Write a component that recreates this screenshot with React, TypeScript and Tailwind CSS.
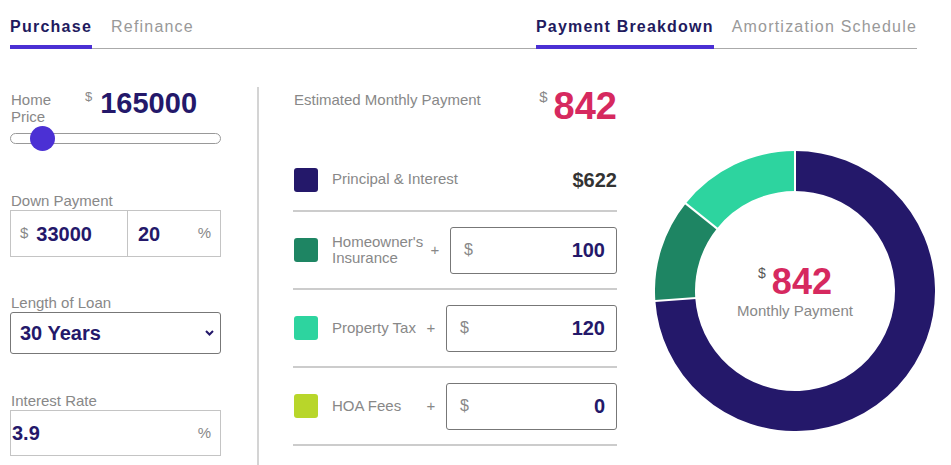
import React from "react";

const INDIGO = "#24186a";

function Donut() {
  const cx = 140, cy = 140, r = 120, sw = 40;
  const vals = [
    { v: 622, c: "#24186a" },
    { v: 100, c: "#1e8563" },
    { v: 120, c: "#2dd49f" },
  ];
  const total = vals.reduce((a, b) => a + b.v, 0);
  let acc = 0;
  const pt = (deg: number, rad: number) => {
    const a = ((deg - 90) * Math.PI) / 180;
    return [cx + rad * Math.cos(a), cy + rad * Math.sin(a)];
  };
  const arcs = vals.map((s) => {
    const start = (acc / total) * 360;
    acc += s.v;
    const end = (acc / total) * 360;
    const [x1, y1] = pt(start, r);
    const [x2, y2] = pt(end, r);
    const large = end - start > 180 ? 1 : 0;
    return { d: `M ${x1} ${y1} A ${r} ${r} 0 ${large} 1 ${x2} ${y2}`, c: s.c, start };
  });
  return (
    <svg width="280" height="280" viewBox="0 0 280 280">
      {arcs.map((a, i) => (
        <path key={i} d={a.d} stroke={a.c} strokeWidth={sw} fill="none" />
      ))}
      {arcs.map((a, i) => {
        const [x1, y1] = pt(a.start, r - sw / 2 - 1);
        const [x2, y2] = pt(a.start, r + sw / 2 + 1);
        return <line key={"l" + i} x1={x1} y1={y1} x2={x2} y2={y2} stroke="#fff" strokeWidth={2} />;
      })}
    </svg>
  );
}

function Row({
  color,
  label,
  labelW,
  value,
  h,
}: {
  color: string;
  label: React.ReactNode;
  labelW: string;
  value: string;
  h: string;
}) {
  return (
    <div className={`flex items-center ${h}`}>
      <div className="w-[24px] h-[24px] rounded-[3px] ml-[1px]" style={{ backgroundColor: color }} />
      <div className={`ml-[14px] ${labelW} text-[15px] leading-[16px] text-[#888]`}>{label}</div>
      <div className="w-[14px] text-center text-[15px] text-[#888]">+</div>
      <div className="ml-[8px] flex-1 h-[47px] border border-[#777] rounded-[3px] flex items-center justify-between pl-[13px] pr-[11px]">
        <span className="text-[16px] text-[#888]">$</span>
        <span className="text-[20px] font-bold" style={{ color: INDIGO }}>{value}</span>
      </div>
    </div>
  );
}

export default function App() {
  return (
    <div
      className="w-[951px] h-[465px] overflow-hidden bg-white"
      style={{ fontFamily: '"Liberation Sans", Arial, sans-serif' }}
    >
      {/* Tabs */}
      <div className="mx-[10px] w-[907px] flex justify-between border-b border-[#aaa] pt-[17px]">
        <div className="flex gap-[19px]">
          <div className="border-b-4 border-[#4b30d4] -mb-px pb-[7px] text-[16px] leading-[20px] font-bold tracking-[1.25px]" style={{ color: "#221a5e" }}>
            Purchase
          </div>
          <div className="pb-[11px] text-[16px] leading-[20px] tracking-[1.2px] text-[#999]">Refinance</div>
        </div>
        <div className="flex gap-[18px]">
          <div className="border-b-4 border-[#4b30d4] -mb-px pb-[7px] text-[16px] leading-[20px] font-bold tracking-[1.2px]" style={{ color: "#221a5e" }}>
            Payment Breakdown
          </div>
          <div className="pb-[11px] text-[16px] leading-[20px] tracking-[1.2px] text-[#999]">Amortization Schedule</div>
        </div>
      </div>

      {/* Body */}
      <div className="flex px-[10px] mt-[38px] h-[379px]">
        {/* Left column */}
        <div className="w-[211px] flex flex-col">
          <div className="flex h-[42px]">
            <div className="w-[75px] mt-[4px] pl-[1px] text-[15px] leading-[17px] text-[#888]">Home Price</div>
            <div className="text-[13px] leading-[13px] text-[#888] mt-[3px]">$</div>
            <div className="ml-[8px] text-[29px] leading-[32px] font-bold" style={{ color: INDIGO }}>165000</div>
          </div>
          <div className="relative mt-[4px] h-[11px] rounded-full border border-[#999] bg-white">
            <div className="absolute left-[19px] top-[-8px] w-[25px] h-[25px] rounded-full bg-[#4b30d4]" />
          </div>

          <div className="mt-[48px] pl-[1px] text-[15px] leading-[17px] text-[#888]">Down Payment</div>
          <div className="mt-[1px] h-[47px] flex border border-[#c4c4c4]">
            <div className="w-[117px] flex items-center border-r border-[#c4c4c4] pl-[9px]">
              <span className="text-[15px] text-[#888]">$</span>
              <span className="ml-[8px] text-[20px] font-bold" style={{ color: INDIGO }}>33000</span>
            </div>
            <div className="flex-1 flex items-center justify-between pl-[10px] pr-[9px]">
              <span className="text-[20px] font-bold" style={{ color: INDIGO }}>20</span>
              <span className="text-[15px] text-[#888]">%</span>
            </div>
          </div>

          <div className="mt-[37px] pl-[1px] text-[15px] leading-[17px] text-[#888]">Length of Loan</div>
          <div className="mt-[1px] h-[42px] flex items-center justify-between border border-[#777] rounded-[3px] pl-[9px] pr-[6px]">
            <span className="text-[20px] font-bold" style={{ color: INDIGO }}>30 Years</span>
            <svg width="9" height="6" viewBox="0 0 9 6">
              <path d="M1 1 L4.5 4.5 L8 1" stroke={INDIGO} strokeWidth="2" fill="none" />
            </svg>
          </div>

          <div className="mt-[38px] pl-[1px] text-[15px] leading-[17px] text-[#888]">Interest Rate</div>
          <div className="mt-[1px] h-[46px] flex items-center justify-between border border-[#c4c4c4] pl-[1px] pr-[9px]">
            <span className="text-[20px] font-bold" style={{ color: INDIGO }}>3.9</span>
            <span className="text-[15px] text-[#888]">%</span>
          </div>
        </div>

        {/* Divider */}
        <div className="ml-[36px] w-[2px] bg-[#d4d4d4]" />

        {/* Middle column */}
        <div className="ml-[34px] w-[324px] flex flex-col">
          <div className="h-[62px] flex justify-between">
            <div className="mt-[4px] pl-[1px] text-[15px] leading-[17px] text-[#888]">Estimated Monthly Payment</div>
            <div className="flex">
              <span className="text-[15px] leading-[15px] text-[#888] mt-[2px]">$</span>
              <span className="ml-[6px] text-[38px] leading-[38px] font-bold text-[#d6295f]">842</span>
            </div>
          </div>
          <div className="flex items-center h-[61px]">
            <div className="w-[24px] h-[24px] rounded-[3px] ml-[1px] bg-[#24186a]" />
            <div className="ml-[14px] flex-1 text-[15px] text-[#888]">Principal &amp; Interest</div>
            <div className="text-[20px] font-bold text-[#333]">$622</div>
          </div>
          <div className="h-[2px] bg-[#cccccc]" />
          <Row color="#1e8563" label={<>Homeowner's<br />Insurance</>} labelW="w-[96px]" value="100" h="h-[76px]" />
          <div className="h-[2px] bg-[#cccccc]" />
          <Row color="#2dd49f" label="Property Tax" labelW="w-[92px]" value="120" h="h-[76px]" />
          <div className="h-[2px] bg-[#cccccc]" />
          <Row color="#b8d62a" label="HOA Fees" labelW="w-[92px]" value="0" h="h-[76px]" />
          <div className="h-[2px] bg-[#cccccc]" />
        </div>

        {/* Donut */}
        <div className="ml-[38px] mt-[64px] relative w-[280px] h-[280px] shrink-0">
          <Donut />
          <div className="absolute inset-0 flex flex-col items-center justify-center">
            <div className="flex">
              <span className="text-[14px] leading-[14px] text-[#555] mt-[2px]">$</span>
              <span className="ml-[6px] text-[36px] leading-[36px] font-bold text-[#d6295f]">842</span>
            </div>
            <div className="mt-[2px] text-[15px] leading-[17px] text-[#888]">Monthly Payment</div>
          </div>
        </div>
      </div>
    </div>
  );
}
